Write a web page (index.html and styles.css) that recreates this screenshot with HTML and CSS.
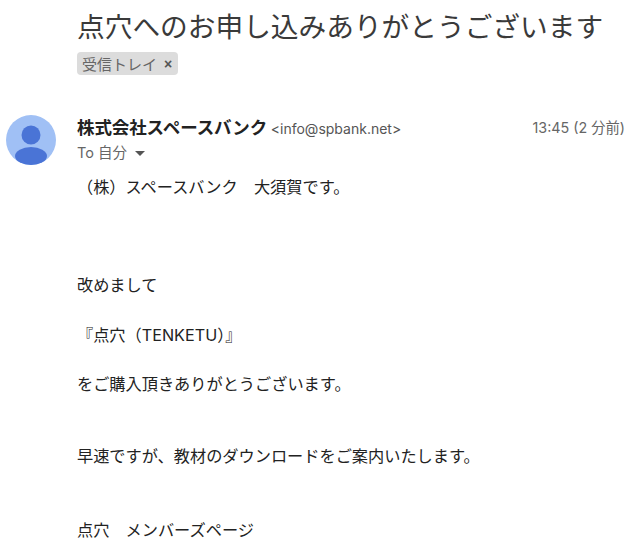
FILE: index.html
```html
<!DOCTYPE html>
<html lang="ja">
<head>
<meta charset="utf-8">
<title>点穴へのお申し込みありがとうございます</title>
<link rel="stylesheet" href="styles.css">
</head>
<body>
<div class="page">
  <h1 class="subject">点穴へのお申し込みありがとうございます</h1>
  <div class="labels"><span class="label">受信トレイ<span class="close">×</span></span></div>
  <div class="message">
    <svg class="avatar" viewBox="0 0 50 50" aria-hidden="true">
      <circle cx="25" cy="25" r="25" fill="#a0c0f5"/>
      <circle cx="25" cy="20" r="9.5" fill="#4a74d6"/>
      <ellipse cx="25" cy="41" rx="16" ry="9" fill="#4a74d6"/>
    </svg>
    <div class="content">
      <div class="head">
        <div class="sender"><b class="name">株式会社スペースバンク</b> <span class="addr">&lt;info@spbank.net&gt;</span></div>
        <div class="time">13:45 (2 分前)</div>
      </div>
      <div class="to">To 自分<span class="caret"></span></div>
      <div class="body">
        <p class="l1">（株）スペースバンク　大須賀です。</p>
        <p class="l2">改めまして</p>
        <p class="l3">『点穴（TENKETU）』</p>
        <p class="l3">をご購入頂きありがとうございます。</p>
        <p class="l4">早速ですが、教材のダウンロードをご案内いたします。</p>
        <p class="l5">点穴　メンバーズページ</p>
      </div>
    </div>
  </div>
</div>
</body>
</html>
```
FILE: styles.css
```css
html, body { margin: 0; padding: 0; background: #fff; overflow: hidden; }
body { font-family: "Noto Sans CJK JP", "Liberation Sans", sans-serif; color: #222; }
.page { width: 640px; height: 548px; overflow: hidden; }
.subject { margin: 0; padding: 6px 0 0 77px; font-size: 27.7px; line-height: 38px; font-weight: 400; color: #3a3a3a; white-space: nowrap; }
.labels { padding: 8px 0 0 77px; display: flex; }
.label { display: flex; align-items: center; height: 23px; padding: 0 6px 0 5px; background: #dcdcdc; border-radius: 4px; font-size: 15px; color: #666; }
.close { margin-left: 7px; font-family: "Liberation Sans", sans-serif; font-size: 14px; font-weight: 700; color: #555; }
.message { display: flex; padding: 40px 0 0 6px; }
.avatar { width: 50px; height: 50px; flex: none; }
.content { margin-left: 21px; width: 548px; }
.head { display: flex; justify-content: space-between; align-items: center; height: 23px; }
.name { font-size: 17.5px; font-weight: 700; color: #222; letter-spacing: -0.1px; }
.addr { font-size: 14px; color: #555; font-family: "Inter", "Noto Sans CJK JP", sans-serif; }
.time { font-size: 14.3px; color: #666; font-family: "Inter", "Noto Sans CJK JP", sans-serif; }
.to { margin-top: 5px; font-size: 14.5px; line-height: 20px; color: #666; display: flex; align-items: center; font-family: "Inter", "Noto Sans CJK JP", sans-serif; }
.caret { margin-left: 8px; width: 0; height: 0; border: 5px solid transparent; border-top: 5px solid #555; border-bottom: 0; }
.body { font-size: 16.2px; line-height: 24px; color: #222; font-family: "Inter", "Noto Sans CJK JP", sans-serif; }
.body p { margin: 0; white-space: nowrap; }
.l1 { padding-top: 12px; }
.l2 { padding-top: 74px; }
.l3 { padding-top: 25.6px; }
.l4 { padding-top: 47.4px; }
.l5 { padding-top: 50px; }
```
